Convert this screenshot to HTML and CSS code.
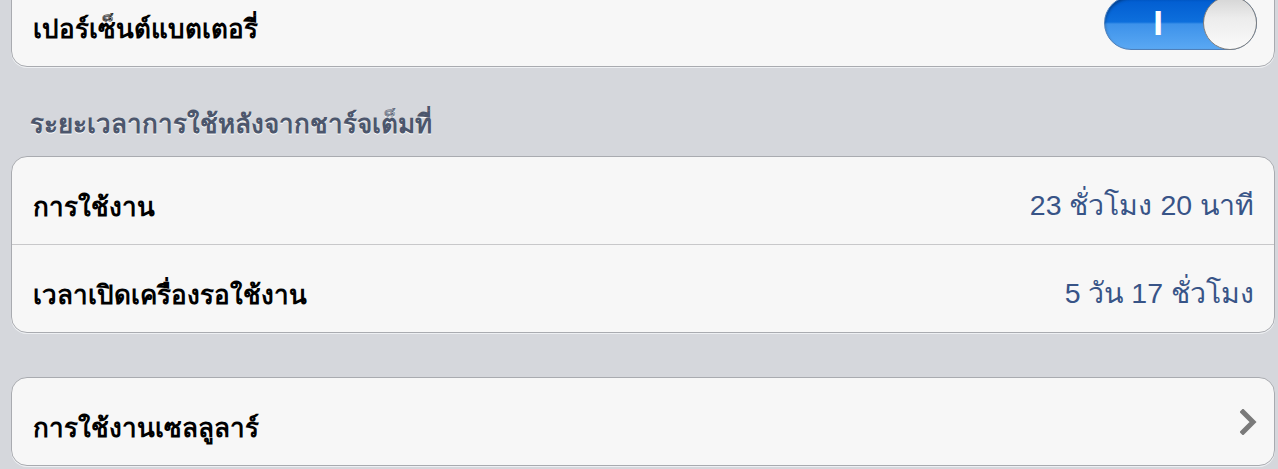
FILE: index.html
```html
<!DOCTYPE html>
<html lang="th">
<head>
<meta charset="utf-8">
<title>แบตเตอรี่</title>
<link rel="stylesheet" href="styles.css">
</head>
<body>
<div class="page">
  <div class="group group-first">
    <div class="row">
      <span class="label">เปอร์เซ็นต์แบตเตอรี่</span>
      <div class="switch">
        <span class="switch-on">I</span>
        <span class="knob"></span>
      </div>
    </div>
  </div>

  <div class="section-title">ระยะเวลาการใช้หลังจากชาร์จเต็มที่</div>
  <div class="group">
    <div class="row">
      <span class="label">การใช้งาน</span>
      <span class="value">23 ชั่วโมง 20 นาที</span>
    </div>
    <div class="row">
      <span class="label">เวลาเปิดเครื่องรอใช้งาน</span>
      <span class="value">5 วัน 17 ชั่วโมง</span>
    </div>
  </div>

  <div class="group group-last">
    <div class="row">
      <span class="label">การใช้งานเซลลูลาร์</span>
      <svg class="chevron" width="18" height="26" viewBox="0 0 18 26" aria-hidden="true">
        <path d="M3 3 L13 13 L3 23" fill="none" stroke="#7a7a7a" stroke-width="5" stroke-linecap="square" stroke-linejoin="miter"/>
      </svg>
    </div>
  </div>
</div>
</body>
</html>
```

FILE: styles.css
```css
html, body {
  margin: 0;
  padding: 0;
}

body {
  background: #d5d7dc;
  font-family: "Liberation Sans", "Noto Sans", "DejaVu Sans", sans-serif;
  overflow: hidden;
  height: 469px;
}

.page {
  display: flex;
  flex-direction: column;
  padding: 0 3px 0 11px;
}

.group {
  background: #f7f7f7;
  border: 1px solid #a9abb0;
  border-radius: 16px;
  box-shadow: 0 1px 0 #eef0f3;
  overflow: hidden;
}

.group-first {
  margin-top: -22px;
}

.group-last {
  margin-top: 44px;
}

.row {
  height: 87px;
  display: flex;
  align-items: center;
  justify-content: space-between;
  padding: 0 20px 0 21px;
  box-sizing: border-box;
}

.row + .row {
  border-top: 1px solid #c8c8ca;
  height: 88px;
}

.label {
  font-size: 26px;
  font-weight: bold;
  color: #000;
  padding-top: 11px;
}

.value {
  font-size: 28.5px;
  color: #385487;
  padding-top: 9px;
}

.section-title {
  font-size: 26px;
  font-weight: bold;
  color: #4c566c;
  text-shadow: 0 1px 0 #fff;
  padding: 36px 0 0 19px;
  box-sizing: border-box;
  height: 89px;
}

.switch {
  position: relative;
  width: 153px;
  height: 54px;
  border-radius: 27px;
  border: 1px solid #4f7fb8;
  box-sizing: border-box;
  margin-right: -3px;
  background: linear-gradient(#005bd0 0%, #0d6fdc 48%, #3d92ea 52%, #5aa8f3 100%);
  box-shadow: inset 0 2px 3px rgba(0, 0, 0, 0.35);
}

.switch-on {
  position: absolute;
  left: 45px;
  top: 6px;
  width: 16px;
  text-align: center;
  color: #fff;
  font-family: "Liberation Sans", sans-serif;
  font-weight: bold;
  font-size: 35px;
  line-height: 40px;
}

.knob {
  position: absolute;
  right: -1px;
  top: -1px;
  width: 54px;
  height: 54px;
  border-radius: 50%;
  box-sizing: border-box;
  border: 1.5px solid #7f7f7f;
  background: linear-gradient(#d4d4d4 0%, #ececec 40%, #fafafa 100%);
}

.chevron {
  display: block;
  margin-right: -4px;
}
```
